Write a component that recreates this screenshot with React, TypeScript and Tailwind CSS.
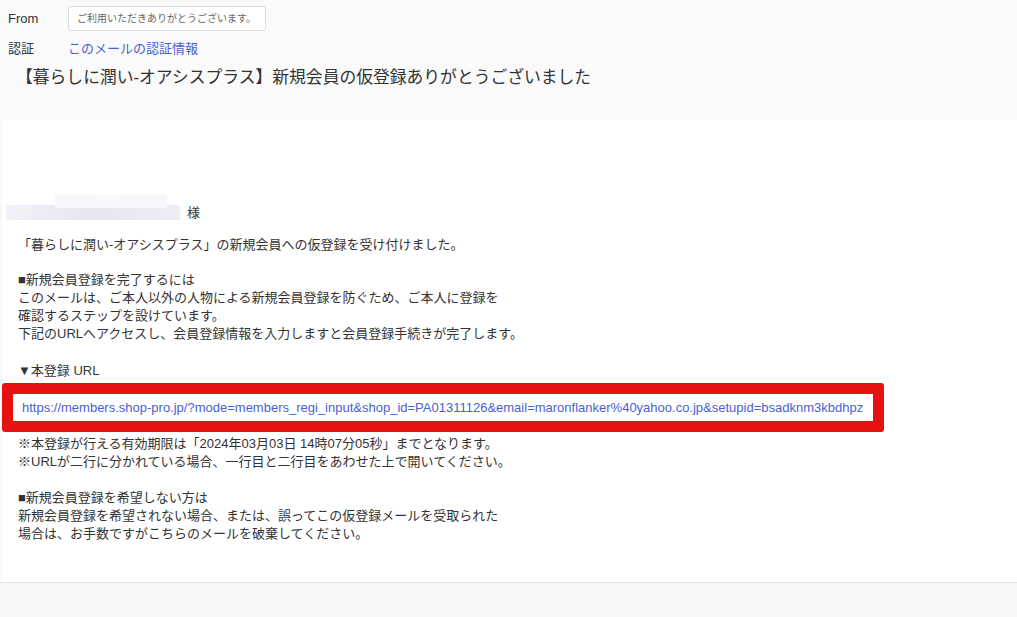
export default function App() {
  const font = 'font-["Liberation_Sans","Noto_Sans_CJK_JP",sans-serif]';
  return (
    <div className={`${font} h-[617px] w-[1017px] overflow-hidden bg-[#f8f8f8] text-[13px] text-[#333]`}>
      <header className="h-[120px] bg-[#fafafa]">
        <div className="flex h-[37px] items-center pl-[8px]">
          <span className="w-[60px] text-[13px] text-[#333]">From</span>
          <div className="flex h-[25px] w-[198px] items-center whitespace-nowrap rounded-[3px] border border-[#dcdcdc] bg-white pl-[8px] text-[10px] text-[#666]">
            ご利用いただきありがとうございます。
          </div>
        </div>
        <div className="flex h-[24px] items-center pl-[8px]">
          <span className="w-[60px]">認証</span>
          <a href="#" className="text-[#4b5fcf]">このメールの認証情報</a>
        </div>
        <h1 className="pl-[16px] pt-[5px] text-[16.8px] leading-[24px] text-[#333]">
          【暮らしに潤い-オアシスプラス】新規会員の仮登録ありがとうございました
        </h1>
      </header>

      <main className="ml-[2px] h-[462px] bg-white pt-[70px]">
        <div className="relative flex h-[30px] items-end">
          <div className="absolute left-[53px] top-[5px] h-[13px] w-[112px] bg-gradient-to-r from-[#f7f7fb] via-[#f9f9fc] to-[#f7f7fb]" />
          <div className="ml-[4px] h-[15px] w-[174px] bg-gradient-to-r from-[#f1f1f7] via-[#e6e6f0] to-[#eeeef5]" />
          <span className="ml-[7px] leading-[15px]">様</span>
        </div>

        <div className="pl-[16px] pt-[16px] leading-[18px]">
          <p>「暮らしに潤い-オアシスプラス」の新規会員への仮登録を受け付けました。</p>
          <p className="mt-[17px]">■新規会員登録を完了するには</p>
          <p>このメールは、ご本人以外の人物による新規会員登録を防ぐため、ご本人に登録を</p>
          <p>確認するステップを設けています。</p>
          <p>下記のURLへアクセスし、会員登録情報を入力しますと会員登録手続きが完了します。</p>
          <p className="mt-[19px]">▼本登録 URL</p>

          <div className="-ml-[16px] mt-[3px] w-[882px] rounded-[3px] border-[11px] border-[#e81111] bg-white">
            <div className="flex h-[27px] items-center pl-[9px]">
              <a href="#" className="text-[#4b5fcf]">
                https://members.shop-pro.jp/?mode=members_regi_input&amp;shop_id=PA01311126&amp;email=maronflanker%40yahoo.co.jp&amp;setupid=bsadknm3kbdhpz
              </a>
            </div>
          </div>

          <p className="mt-[3px]">※本登録が行える有効期限は「2024年03月03日 14時07分05秒」までとなります。</p>
          <p>※URLが二行に分かれている場合、一行目と二行目をあわせた上で開いてください。</p>
          <p className="mt-[18px]">■新規会員登録を希望しない方は</p>
          <p>新規会員登録を希望されない場合、または、誤ってこの仮登録メールを受取られた</p>
          <p>場合は、お手数ですがこちらのメールを破棄してください。</p>
        </div>
      </main>
      <div className="h-px bg-[#e3e3e3]" />
    </div>
  );
}
